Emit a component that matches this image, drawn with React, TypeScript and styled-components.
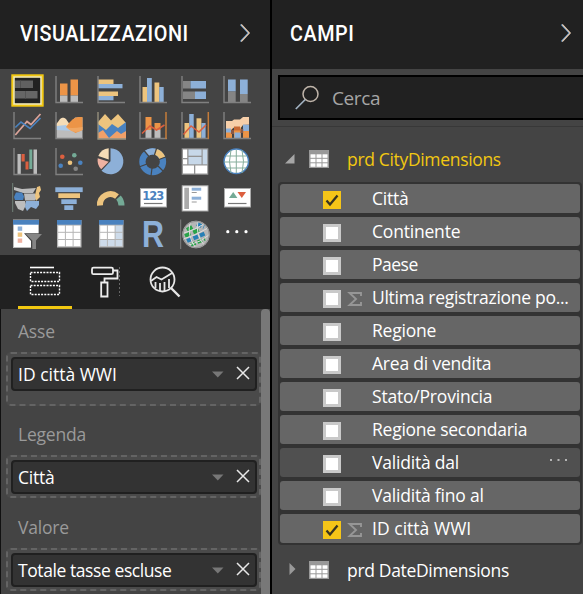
import React from "react";
import styled, { createGlobalStyle } from "styled-components";

const GlobalStyle = createGlobalStyle`
  * { box-sizing: border-box; }
  body { margin: 0; background: #444; overflow: hidden; }
`;

const BLUE = "#8db0d8";
const DEEP = "#4a82bf";
const ORANGE = "#ec9447";
const SAND = "#edc47e";
const GRAY = "#858585";
const SILVER = "#bdbdbd";
const RED = "#dc5f3f";
const GREEN = "#74aa96";
const PINK = "#efb2a2";
const CREAM = "#f5dcb6";

const Workspace = styled.div`
  display: flex;
  width: 583px;
  height: 594px;
  overflow: hidden;
  background: #444;
  color: #fff;
  font-family: "Open Sans", "Noto Sans", sans-serif;
  font-size: 17.5px;
`;

const Panel = styled.section<{ $width: number; $divided?: boolean }>`
  display: flex;
  flex-direction: column;
  flex: none;
  width: ${(p) => p.$width}px;
  border-right: ${(p) => (p.$divided ? "2px solid #000" : "none")};
`;

const PanelHeader = styled.header<{ $left: number; $right: number }>`
  display: flex;
  flex: none;
  align-items: center;
  justify-content: space-between;
  height: 69px;
  padding: 0 ${(p) => p.$right}px 3px ${(p) => p.$left}px;
  background: #212121;
`;

const Title = styled.h1`
  margin: 0;
  padding-top: 1px;
  font: 500 22px/30px Roboto, sans-serif;
  letter-spacing: 0.6px;
  white-space: nowrap;
  transform: scaleX(0.9);
  transform-origin: left;
`;

const Gallery = styled.div`
  display: grid;
  flex: none;
  grid-template-columns: repeat(6, 42px);
  grid-auto-rows: 36px;
  height: 186px;
  padding: 3px 0 0 6px;
`;

const Drawing = styled.svg`
  display: block;
  flex: none;
  overflow: visible;
`;

const Tabs = styled.nav`
  display: flex;
  flex: none;
  gap: 6px;
  height: 54px;
  padding-left: 18px;
  background: #212121;
`;

const Tab = styled.div<{ $active?: boolean }>`
  width: 54px;
  height: 54px;
  border-bottom: 3px solid ${(p) => (p.$active ? "#f2c811" : "transparent")};
`;

const WellArea = styled.div`
  display: flex;
  flex: 1;
  min-height: 0;
  border-left: 1px solid #111;
`;

const Wells = styled.div`
  flex: none;
  width: 260px;
  padding-left: 5px;
`;

const WellLabel = styled.div<{ $height: number }>`
  display: flex;
  align-items: flex-end;
  height: ${(p) => p.$height}px;
  padding: 0 0 9.5px 12px;
  line-height: 24px;
  color: #9a9a9a;
  letter-spacing: -0.2px;
`;

const Well = styled.div<{ $height: number }>`
  width: 255px;
  height: ${(p) => p.$height}px;
  padding: 3px;
  border: 2px dashed #646464;
  border-radius: 5px;
  background: #4a4a4a;
`;

const Chip = styled.div`
  display: flex;
  align-items: center;
  width: 246px;
  height: 34px;
  padding: 0 5px 0 5px;
  border: 2px solid #202020;
  border-radius: 4px;
  background: #333;
  line-height: 30px;
`;

const ChipName = styled.span<{ $spacing: number }>`
  flex: 1;
  letter-spacing: ${(p) => p.$spacing}px;
  white-space: nowrap;
`;

const ScrollThumb = styled.div`
  width: 9px;
  border-radius: 4px 4px 0 0;
  background: #787878;
`;

const SearchZone = styled.div`
  flex: none;
  height: 58px;
  padding: 6px 0 0 6px;
  border-bottom: 1px solid #383838;
`;

const SearchBox = styled.div`
  display: flex;
  align-items: center;
  gap: 12px;
  height: 45px;
  padding-left: 15px;
  border: 2px solid #000;
  border-right: 0;
  background: #212121;
  color: #a6a6a6;
  font-size: 19px;
  letter-spacing: -0.4px;
`;

const TableRow = styled.div<{ $height: number; $top?: number; $active?: boolean }>`
  display: flex;
  align-items: center;
  flex: none;
  height: ${(p) => p.$height}px;
  padding: ${(p) => p.$top ?? 0}px 0 0 13px;
  color: ${(p) => (p.$active ? "#f2c811" : "#fff")};
`;

const TableName = styled.span`
  margin-left: 18px;
  letter-spacing: -0.33px;
  white-space: nowrap;
`;

const FieldList = styled.div`
  display: flex;
  flex-direction: column;
  flex: none;
  gap: 4px;
  width: 304px;
  height: 363px;
  margin-left: 6px;
  padding: 2px;
  border-radius: 4px;
  background: #333;
`;

const Field = styled.div<{ $hover?: boolean }>`
  display: flex;
  align-items: center;
  height: 29px;
  padding: 0 9px 0 43px;
  border-radius: 3px;
  background: ${(p) => (p.$hover ? "#505050" : "#666")};
`;

const Check = styled.span<{ $on?: boolean }>`
  display: flex;
  flex: none;
  width: 18px;
  height: 18px;
  margin-top: 3px;
  border: ${(p) => (p.$on ? "0" : "3px solid #c9c9c9")};
  background: ${(p) => (p.$on ? "#f5c518" : "#fff")};
`;

const SigmaSlot = styled.span`
  flex: none;
  width: 31px;
  padding: 3px 0 0 7px;
`;

const FieldName = styled.span<{ $spacing: number }>`
  flex: 1;
  padding-bottom: 1px;
  line-height: 28px;
  letter-spacing: ${(p) => p.$spacing}px;
  white-space: nowrap;
`;

const Axis = () => <path d="M8 4v26.5h27" fill="none" stroke="#808080" strokeWidth="1.4" />;

type Bar = [number, number, number, number, string];
const Bars = ({ items }: { items: Bar[] }) => (
  <>
    {items.map(([x, y, w, h, c], i) => (
      <rect key={i} x={x} y={y} width={w} height={h} fill={c} />
    ))}
  </>
);

const TableVisual = ({ matrix }: { matrix?: boolean }) => (
  <>
    <rect x="9" y="4" width="24.5" height="27.5" fill="#b5b5b5" />
    <rect x="9" y="4" width="24.5" height="4.7" fill={DEEP} />
    {[0, 1, 2].map((r) =>
      [0, 1, 2].map((c) => (
        <rect
          key={`${r}${c}`}
          x={10.2 + c * 7.7}
          y={9.6 + r * 7.2}
          width="6.7"
          height="6.2"
          fill={matrix && (r === 2 || c === 2) ? "#cddbea" : "#fff"}
        />
      ))
    )}
  </>
);

const visuals: React.ReactNode[] = [
  <>
    <rect x="6.5" y="3.5" width="30" height="30" fill="#222" stroke="#f2c811" strokeWidth="2.4" />
    <rect x="8" y="5" width="27" height="27" fill="none" stroke="#fff6bd" strokeWidth="1.5" />
    <Bars items={[[9, 8.5, 18, 7.5, "#606060"], [9, 19, 22.5, 7.5, "#666"], [14, 8.5, 1, 7.5, "#505050"], [19, 19, 1, 7.5, "#555"]]} />
  </>,
  <>
    <Bars items={[[12, 11.5, 7.5, 12, ORANGE], [12, 23.5, 7.5, 6.5, SILVER], [22.5, 7.5, 7.5, 16, ORANGE], [22.5, 23.5, 7.5, 6.5, SILVER]]} />
    <Axis />
  </>,
  <>
    <Bars items={[[8, 7.5, 15.5, 4.5, SAND], [8, 12, 24.5, 4.3, BLUE], [8, 19.5, 20, 4.5, SAND], [8, 24, 15.5, 4.3, BLUE]]} />
    <Axis />
  </>,
  <>
    <Bars items={[[10.5, 15, 4.7, 15, SAND], [15, 6, 4.8, 24, BLUE], [22.5, 10.5, 4.8, 19.5, SAND], [27.2, 15, 4.5, 15, BLUE]]} />
    <Axis />
  </>,
  <>
    <Bars items={[[9, 9, 7.5, 7.5, GRAY], [16.5, 9, 15.5, 7.5, BLUE], [9, 19.5, 12, 7.5, GRAY], [21, 19.5, 11, 7.5, BLUE]]} />
    <Axis />
  </>,
  <>
    <Bars items={[[12, 7.5, 7.7, 12, BLUE], [12, 19.5, 7.7, 11, GRAY], [24, 7.5, 7.7, 14.5, BLUE], [24, 22, 7.7, 8.5, GRAY]]} />
    <Axis />
  </>,
  <>
    <Axis />
    <path d="M9.3 27L21 13.5 25 16.5 34.5 6" fill="none" stroke="#dca49a" strokeWidth="1.7" />
    <path d="M9.3 19.5L15 14 24 20.5 34.5 10" fill="none" stroke={DEEP} strokeWidth="1.7" />
  </>,
  <>
    <path d="M8.5 16L15 9.5 22 16.5 27 9.5h7.5V30h-26z" fill={SILVER} />
    <path d="M8.5 16L12 11q3-2.500 6 0l4 6-6 2-7.500-1z" fill={CREAM} />
    <path d="M8.5 18L18 17l7 6-16.500-1z" fill="#acc9e6" />
    <path d="M18 19Q25 9 30 9h4.500v13l-7 3z" fill={ORANGE} />
    <path d="M18 19Q22 21 34.500 19v3q-9 5-16.500-3z" fill="#f0a763" />
    <Axis />
  </>,
  <>
    <path d="M8 14L15 6l6 6.500L28 6l8 9v15.500H8z" fill={SAND} />
    <path d="M8 16l8 6 6-6 6 4 8-6v16.500H8z" fill={DEEP} />
    <path d="M8 25l5-3 6 8 8-7 4 3 5-3v7.500H8z" fill="#f0a069" />
    <path d="M8 4v27h28" fill="none" stroke="#9c9581" strokeWidth="1.3" />
  </>,
  <>
    <Bars items={[[13.5, 9, 6, 13, ORANGE], [13.5, 22, 6, 8, SILVER], [22.5, 15, 6, 7, ORANGE], [22.5, 22, 6, 8, SILVER]]} />
    <Axis />
    <path d="M34 4v27" stroke="#c47c3a" strokeWidth="1.5" />
    <path d="M10 25.500L18 18l6.500 4 8-5" fill="none" stroke={RED} strokeWidth="1.5" />
  </>,
  <>
    <Bars items={[[10.5, 15, 4.7, 15, SAND], [15.2, 6, 4.5, 24, BLUE], [22.5, 10.3, 4.9, 19.7, SAND], [27.4, 15, 4.2, 15, BLUE]]} />
    <Axis />
    <path d="M34.300 4v27" stroke="#c47c3a" strokeWidth="1.5" />
    <path d="M9.500 26.500L17 18l8 6 7-7" fill="none" stroke={RED} strokeWidth="1.5" />
  </>,
  <>
    <Bars items={[[10, 14, 6, 16, ORANGE], [18, 12, 7, 18, ORANGE], [27, 9, 6, 21, ORANGE]]} />
    <path d="M10 13h6l2-1.500h6L27 9h6v7l-6 1-2 2.500h-7L16 21h-6z" fill="#f7cfa9" />
    <Bars items={[[10, 20.5, 5, 4, BLUE], [18, 18.5, 6, 4, "#c86a36"], [27, 16.5, 6, 6.5, BLUE], [15, 22, 3, 4, "#8a5947"], [18.5, 24.5, 6, 5.5, BLUE], [24.5, 21, 2.7, 4, "#8a5947"], [27.5, 25, 5.5, 5, ORANGE]]} />
    <Axis />
  </>,
  <>
    <Bars items={[[11.5, 10, 3.3, 20, SILVER], [15.5, 10, 3.2, 7.5, RED], [19.5, 17.5, 3, 8, RED], [23.3, 5.5, 3, 19.5, GREEN], [27.5, 5.5, 3.5, 24.5, SILVER]]} />
    <Axis />
  </>,
  <>
    <Axis />
    {([[14.3, 12.7, RED], [26.3, 11.3, GREEN], [22, 18.7, SAND], [12.7, 21.7, DEEP], [32.3, 18.7, DEEP], [27.7, 24.7, GRAY]] as [number, number, string][]).map(([x, y, c]) => (
      <circle key={`${x}-${y}`} cx={x} cy={y} r="2.3" fill={c} />
    ))}
  </>,
  <>
    <path d="M20.500 17.300V4.300a13 13 0 1 1-9 22.500z" fill={BLUE} />
    <path d="M18.700 17.800l-7.500 7.500a13 13 0 0 1-3.500-11z" fill={PINK} />
    <path d="M18.700 15.500L8.300 12a12.500 12.500 0 0 1 10.400-7.800z" fill={CREAM} />
  </>,
  <>
    <g fill="none" strokeWidth="6.3">
      <circle cx="20.7" cy="17.7" r="10.3" stroke={DEEP} />
      <path d="M14.300 9.600A10.300 10.300 0 0 1 23 7.700" stroke={BLUE} />
      <path d="M23 7.700A10.300 10.300 0 0 1 30.300 14" stroke={SAND} />
    </g>
    <path d="M17 12.500L12 6.500M22.300 11.500L25 3M27 15.500l8-3M26 22l6 6M20 24l-1 8M15 20l-8 3" stroke="#444" strokeWidth="1.2" />
  </>,
  <>
    <rect x="7.7" y="4.3" width="26.6" height="26.5" fill="#949494" />
    <Bars items={[[9, 5.5, 4.2, 8.5, "#fff"], [9, 15.3, 4.2, 5, "#fff"], [14.5, 5.5, 13, 6.2, "#c7d8e9"], [14.5, 13, 13, 7.3, "#c7d8e9"], [28.7, 5.5, 4.5, 14.8, "#c7d8e9"], [9, 21.5, 11, 8, "#fff"], [21.3, 21.5, 11.9, 8, "#fff"]]} />
  </>,
  <>
    <circle cx="20.3" cy="17.3" r="12.2" fill="#fff" stroke={DEEP} strokeWidth="1.5" />
    <path d="M10 12h20.500M8 18h24.500M10 24h20.500M20.300 6v23M15 6q-3 11 0 23M26 6q3 11 0 23" fill="none" stroke="#87ae9d" strokeWidth="1" />
  </>,
  <>
    <path d="M6.700 3v29" stroke="#708078" strokeWidth="1" />
    <path d="M8 7l8 2 14-1-3 5H17l-9-3z" fill={SILVER} />
    <path d="M10 12.500h6l2 4-1 3.500H9l-1-3z" fill={DEEP} />
    <path d="M18 13.500h11l2 4-2 3H19z" fill={SILVER} />
    <path d="M31 7l3-1 1 4-2 3 1 4-4 4-1-6z" fill={SAND} />
    <path d="M9 21h10l1 4-3 6-5-2-3-6z" fill={SILVER} />
    <path d="M20 21h13v4l-3 4-5-2-4 4-2-4z" fill={BLUE} />
  </>,
  <Bars items={[[7.3, 7.3, 27.4, 4.8, BLUE], [10.3, 13.3, 21.7, 4.7, SAND], [13.3, 19.3, 15.4, 4.7, BLUE], [16.3, 25.3, 9, 4.7, BLUE]]} />,
  <>
    <path d="M10 25.500a10.500 10.500 0 0 1 17-9" fill="none" stroke={SAND} strokeWidth="6" />
    <path d="M28.500 17.500q3 3.500 3 8" fill="none" stroke={GREEN} strokeWidth="6" />
  </>,
  <>
    <rect x="8.5" y="8.5" width="26" height="18.5" fill="#fff" stroke="#aaa" />
    <text x="10.2" y="20" fill={DEEP} fontFamily="DejaVu Sans" fontWeight="700" fontSize="11.5" textLength="22">123</text>
    <path d="M12 23.500h18.500" stroke="#777" strokeWidth="1.2" />
  </>,
  <>
    <rect x="8.2" y="5.8" width="25.8" height="25.2" fill="#fff" stroke="#aaa" />
    <Bars items={[[10.3, 7.7, 4.7, 21.3, "#aaa"], [17.7, 7.7, 9.5, 3, BLUE], [17.7, 12, 5, 1, "#999"], [17.7, 16.7, 9.5, 3, BLUE], [17.7, 21.5, 5, 1, "#999"]]} />
  </>,
  <>
    <rect x="8.5" y="8.5" width="26" height="18.5" fill="#fff" stroke="#aaa" />
    <path d="M13 18l4.200-6 4.200 6z" fill={GREEN} />
    <path d="M21.500 12H30l-4.200 6z" fill={RED} />
    <path d="M12 23.500h18.500" stroke="#777" strokeWidth="1.2" />
  </>,
  <>
    <rect x="7.5" y="4" width="25" height="27.5" fill="#fff" stroke="#bbb" />
    <Bars items={[[7, 4, 26, 4.7, DEEP], [11.7, 10.5, 4.5, 4.3, BLUE], [11.7, 16.5, 4.5, 4.3, SAND], [11.7, 22.5, 4.5, 4.3, PINK]]} />
    <path d="M25 34V25L18 17.300h18.500V34z" fill="#444" />
    <path d="M19.700 18H36l-6 6.500V33h-3.700v-8.500z" fill="#858585" />
  </>,
  <TableVisual />,
  <TableVisual matrix />,
  <text x="10" y="31.3" fill={BLUE} fontFamily="Liberation Sans" fontWeight="700" fontSize="37" textLength="22" lengthAdjust="spacingAndGlyphs">R</text>,
  <>
    <path d="M6.700 3.500v29.500" stroke="#808080" strokeWidth="1" />
    <circle cx="22" cy="18.5" r="13.7" fill="#b6b6b6" />
    <g fill="none">
      <path d="M13 14l7-4M11 20l16-7" stroke="#28a348" strokeWidth="4" strokeDasharray="6 3" />
      <path d="M13 25l19-8M23 8l7 3" stroke="#277fb5" strokeWidth="4" strokeDasharray="5 2" />
      <path d="M17 29l14-6" stroke="#25a247" strokeWidth="3.5" strokeDasharray="5 2" />
      <path d="M10 17q11-3 20-9M9 23q12-3 25-11M15 29q12-3 20-10M16 7q-3 12 5 24M24 5q-3 13 6 24" stroke="#ddd" strokeWidth="1" />
      <circle cx="22" cy="18.5" r="13.2" stroke="#929292" />
    </g>
  </>,
  <g fill="#fff">
    <circle cx="11.8" cy="15.7" r="1.6" />
    <circle cx="20.8" cy="15.7" r="1.6" />
    <circle cx="30" cy="15.7" r="1.6" />
  </g>,
];

const Chevron = () => (
  <Drawing width="12" height="20" viewBox="0 0 12 20" fill="none">
    <path d="M1.500 1.500L9.500 10l-8 8.500" stroke="#5f9bd2" strokeWidth="1.5" />
    <path d="M2.300 1.500l8 8.500-8 8.500" stroke="#e9c8aa" strokeWidth="1.1" />
  </Drawing>
);

const TableIcon = () => (
  <Drawing width="20" height="18" viewBox="0 0 20 18">
    <path d="M0 0h20v18H0z" fill="#999" />
    {[0, 1, 2].map((r) => [0, 1, 2].map((c) => (
      <rect key={`${r}${c}`} x={1.5 + c * 6} y={4.3 + r * 4.5} width="5" height="3.5" fill="#fff" />
    )))}
  </Drawing>
);

const Sigma = () => (
  <Drawing width="14" height="14" viewBox="0 0 14 14" fill="none">
    <path d="M13 4V1H1.500L8 7l-6.500 6H13v-3" stroke="#969696" strokeWidth="1.9" />
  </Drawing>
);

const wells = [
  { label: "Asse", top: 43, name: "ID città WWI", height: 54, spacing: 0 },
  { label: "Legenda", top: 49, name: "Città", height: 43, spacing: -0.2 },
  { label: "Valore", top: 50, name: "Totale tasse escluse", height: 43, spacing: -0.42 },
];

interface FieldItem {
  name: string;
  on?: boolean;
  sum?: boolean;
  hover?: boolean;
  spacing?: number;
}

const fields: FieldItem[] = [
  { name: "Città", on: true },
  { name: "Continente" },
  { name: "Paese", spacing: -0.5 },
  { name: "Ultima registrazione po...", sum: true, spacing: -0.28 },
  { name: "Regione" },
  { name: "Area di vendita" },
  { name: "Stato/Provincia" },
  { name: "Regione secondaria", spacing: -0.25 },
  { name: "Validità dal", hover: true },
  { name: "Validità fino al" },
  { name: "ID città WWI", on: true, sum: true, spacing: 0.03 },
];

export default function App() {
  return (
    <>
      <GlobalStyle />
      <Workspace>
        <Panel $width={272} $divided>
          <PanelHeader $left={20} $right={19}>
            <Title>VISUALIZZAZIONI</Title>
            <Chevron />
          </PanelHeader>
          <Gallery>
            {visuals.map((v, i) => (
              <Drawing key={i} width="42" height="36" viewBox="0 0 42 36">{v}</Drawing>
            ))}
          </Gallery>
          <Tabs>
            <Tab $active>
              <Drawing width="54" height="51" viewBox="0 0 54 51" fill="none" stroke="#fff">
                <path d="M12 12.500h24" strokeWidth="1.6" />
                <path d="M12.500 17.500h29v9h-29zM12.500 30.500h29v9h-29z" strokeWidth="1.4" strokeDasharray="2 1.2" />
              </Drawing>
            </Tab>
            <Tab>
              <Drawing width="54" height="51" viewBox="0 0 54 51" fill="none" stroke="#eee" strokeWidth="1.8">
                <rect x="14" y="12.7" width="21" height="6.5" rx="1.5" />
                <path d="M35 15.500h4.500v8H26.500v4M23.200 27.500h6.300v14h-6.300z" />
                <path d="M41.500 12v29" stroke="#666" strokeWidth="1" strokeDasharray="2 2" />
              </Drawing>
            </Tab>
            <Tab>
              <Drawing width="54" height="51" viewBox="0 0 54 51" fill="none" stroke="#e6e6e6" strokeWidth="1.8">
                <circle cx="24.5" cy="24.5" r="12" />
                <path d="M33 33l8.500 8.500" strokeWidth="2.4" />
                <path d="M13 26l5.500-4 5 2.500L35 17.500M17.500 27v6M22 28v8M26.500 27v9M31 24v9" />
              </Drawing>
            </Tab>
          </Tabs>
          <WellArea>
            <Wells>
              {wells.map((w) => (
                <React.Fragment key={w.label}>
                  <WellLabel $height={w.top}>{w.label}</WellLabel>
                  <Well $height={w.height}>
                    <Chip>
                      <ChipName $spacing={w.spacing}>{w.name}</ChipName>
                      <Drawing width="38" height="14" viewBox="0 0 38 14">
                        <path d="M0 4.500h11.500l-5.700 6z" fill="#777" />
                        <path d="M25 0l12 12M37 0L25 12" stroke="#e8e8e8" strokeWidth="1.5" />
                      </Drawing>
                    </Chip>
                  </Well>
                </React.Fragment>
              ))}
            </Wells>
            <ScrollThumb />
          </WellArea>
        </Panel>
        <Panel $width={311}>
          <PanelHeader $left={18} $right={11}>
            <Title>CAMPI</Title>
            <Chevron />
          </PanelHeader>
          <SearchZone>
            <SearchBox>
              <Drawing width="25" height="25" viewBox="0 0 25 25" fill="none">
                <circle cx="15.5" cy="9" r="7.5" stroke="#c0b5aa" strokeWidth="1.5" />
                <path d="M10.300 14.500L.8 24" stroke="#a2b2c2" strokeWidth="1.7" />
              </Drawing>
              Cerca
            </SearchBox>
          </SearchZone>
          <TableRow $height={55} $top={9} $active>
            <Drawing width="24" height="18" viewBox="0 0 24 18">
              <path d="M0 13.500h9.500V4z" fill="#a6a6a6" />
            </Drawing>
            <TableIcon />
            <TableName>prd CityDimensions</TableName>
          </TableRow>
          <FieldList>
            {fields.map((f) => (
              <Field key={f.name} $hover={f.hover}>
                <Check $on={f.on}>
                  {f.on && (
                    <Drawing width="18" height="18" viewBox="0 0 18 18" fill="none">
                      <path d="M3.500 9.500l3.500 4 7.500-9" stroke="#383420" strokeWidth="2.3" />
                    </Drawing>
                  )}
                </Check>
                <SigmaSlot>{f.sum && <Sigma />}</SigmaSlot>
                <FieldName $spacing={f.spacing ?? -0.2}>{f.name}</FieldName>
                {f.hover && (
                  <Drawing width="24" height="10" viewBox="0 0 24 10" fill="#b5b5b5">
                    <path d="M3 1h2v2H3zM10.500 1h2v2h-2zM18 1h2v2h-2z" />
                  </Drawing>
                )}
              </Field>
            ))}
          </FieldList>
          <TableRow $height={49}>
            <Drawing width="24" height="18" viewBox="0 0 24 18">
              <path d="M4.500 2v12l6-6z" fill="#999" />
            </Drawing>
            <TableIcon />
            <TableName>prd DateDimensions</TableName>
          </TableRow>
        </Panel>
      </Workspace>
    </>
  );
}
